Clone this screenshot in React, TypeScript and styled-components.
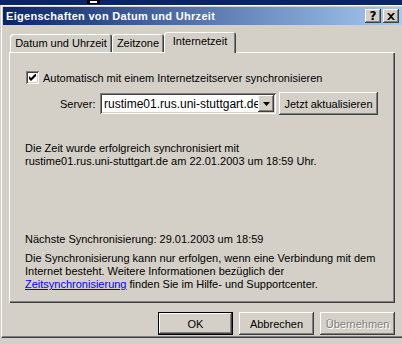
import styled, { createGlobalStyle } from "styled-components";

const face = "#d4d0c8";

const GlobalStyle = createGlobalStyle`
  html, body {
    margin: 0;
    padding: 0;
    background: ${face};
    overflow: hidden;
  }
  body {
    font-family: "Liberation Sans", Arial, sans-serif;
    font-size: 11px;
    color: #000;
  }
`;

const raised = `
  box-shadow: inset -1px -1px #404040, inset 1px 1px #fff,
    inset -2px -2px #808080, inset 2px 2px ${face};
`;

const sunken = `
  box-shadow: inset 1px 1px #808080, inset -1px -1px #fff,
    inset 2px 2px #404040, inset -2px -2px ${face};
`;

const TopStrip = styled.div`
  height: 5px;
  background: #0a246a;
  display: flex;
  padding-left: 87px;
`;

const Window = styled.div`
  margin-left: 1px;
  border-left: 1px solid #fff;
  border-top: 1px solid #fff;
  border-bottom: 1px solid #404040;
  padding-top: 1px;
  height: 333px;
  box-sizing: border-box;
  box-shadow: inset 0 -1px #808080;
`;

const TitleBar = styled.div`
  margin-left: 1px;
  height: 18px;
  display: flex;
  align-items: center;
  padding: 0 3px;
  background: linear-gradient(to right, #0a246a, #a6caf0);
  color: #fff;
  font-weight: bold;
  font-size: 11px;
`;

const TitleText = styled.span`
  flex: 1;
  white-space: nowrap;
  letter-spacing: 0.3px;
`;

const TitleButtons = styled.div`
  display: flex;
  gap: 2px;
`;

const TitleButton = styled.div`
  width: 16px;
  height: 14px;
  background: ${face};
  ${raised}
  display: flex;
  align-items: center;
  justify-content: center;
  color: #000;
  font-weight: bold;
  font-size: 12px;
  line-height: 14px;
  font-family: "DejaVu Sans", sans-serif;
`;

const Body = styled.div`
  padding-left: 7px;
`;

const TabRow = styled.div`
  margin-top: 7px;
  display: flex;
  align-items: flex-end;
  height: 20px;
  padding-left: 1px;
`;

const Tab = styled.div<{ $active?: boolean; $w: number }>`
  width: ${(p) => p.$w}px;
  height: ${(p) => (p.$active ? 21 : 18)}px;
  margin-bottom: ${(p) => (p.$active ? -1 : 0)}px;
  position: relative;
  z-index: ${(p) => (p.$active ? 1 : 0)};
  box-sizing: border-box;
  background: ${face};
  border-radius: 3px 3px 0 0;
  box-shadow: inset 1px 1px #fff, inset -1px 0 #404040, inset -2px 0 #808080;
  display: flex;
  justify-content: center;
  padding-top: 3px;
  white-space: nowrap;
`;

const Panel = styled.div`
  width: 386px;
  height: 251px;
  box-sizing: border-box;
  box-shadow: inset 1px 1px #fff, inset -1px -1px #404040, inset -2px -2px #808080;
  padding: 19px 0 0 16px;
  display: flex;
  flex-direction: column;
`;

const CheckRow = styled.label`
  display: flex;
  align-items: center;
  gap: 4px;
  height: 13px;
  margin-left: 1px;
  white-space: nowrap;
`;

const CheckBox = styled.span`
  width: 13px;
  height: 13px;
  background: #fff;
  ${sunken}
  display: flex;
  align-items: center;
  justify-content: center;
`;

const ServerRow = styled.div`
  margin-top: 8px;
  display: flex;
  align-items: center;
  gap: 3px;
  padding-left: 35px;
`;

const FieldLabel = styled.span`
  width: 37px;
`;

const Combo = styled.div`
  width: 176px;
  height: 21px;
  box-sizing: border-box;
  background: #fff;
  ${sunken}
  display: flex;
  align-items: center;
  padding: 2px;
`;

const ComboText = styled.span`
  flex: 1;
  min-width: 0;
  overflow: hidden;
  white-space: nowrap;
  padding-left: 2px;
  font-size: 12px;
`;

const ComboArrow = styled.div`
  width: 16px;
  height: 17px;
  flex-shrink: 0;
  background: ${face};
  ${raised}
  display: flex;
  align-items: center;
  justify-content: center;
`;

const Button = styled.div<{ $default?: boolean; $disabled?: boolean; $w?: number }>`
  width: ${(p) => p.$w ?? 75}px;
  height: 23px;
  box-sizing: border-box;
  background: ${face};
  display: flex;
  align-items: center;
  justify-content: center;
  white-space: nowrap;
  color: ${(p) => (p.$disabled ? "#808080" : "#000")};
  text-shadow: ${(p) => (p.$disabled ? "1px 1px #fff" : "none")};
  box-shadow: ${(p) =>
    p.$default
      ? "inset 0 0 0 1px #000, inset -2px -2px #404040, inset 2px 2px #fff, inset -3px -3px #808080"
      : `inset -1px -1px #404040, inset 1px 1px #fff, inset -2px -2px #808080, inset 2px 2px ${face}`};
`;

const Text = styled.div<{ $mt: number }>`
  margin-top: ${(p) => p.$mt}px;
  line-height: 13px;
  white-space: nowrap;
`;

const Link = styled.a`
  color: #0000ff;
  text-decoration: underline;
`;

const Footer = styled.div`
  width: 386px;
  margin-top: 9px;
  display: flex;
  justify-content: flex-end;
  gap: 6px;
`;

const Check = () => (
  <svg width="7" height="7" viewBox="0 0 7 7">
    <path d="M0 2v3l2 2l5-5v-3l-5 5z" fill="#000" />
  </svg>
);

export default function App() {
  return (
    <>
      <GlobalStyle />
      <TopStrip>
        <svg width="13" height="5" viewBox="0 0 13 5">
          <rect width="13" height="4" fill="#000" />
          <rect x="3" y="1" width="7" height="2" fill="#fff" />
        </svg>
      </TopStrip>
      <Window>
        <TitleBar>
          <TitleText>Eigenschaften von Datum und Uhrzeit</TitleText>
          <TitleButtons>
            <TitleButton>?</TitleButton>
            <TitleButton>
              <svg width="8" height="7" viewBox="0 0 8 7">
                <path d="M0 0h2l2 2l2-2h2l-3 3.5l3 3.5h-2l-2-2l-2 2h-2l3-3.5z" fill="#000" />
              </svg>
            </TitleButton>
          </TitleButtons>
        </TitleBar>
        <Body>
          <TabRow>
            <Tab $w={102}>Datum und Uhrzeit</Tab>
            <Tab $w={52}>Zeitzone</Tab>
            <Tab $w={72} $active>
              Internetzeit
            </Tab>
          </TabRow>
          <Panel>
            <CheckRow>
              <CheckBox>
                <Check />
              </CheckBox>
              Automatisch mit einem Internetzeitserver synchronisieren
            </CheckRow>
            <ServerRow>
              <FieldLabel>Server:</FieldLabel>
              <Combo>
                <ComboText>rustime01.rus.uni-stuttgart.de</ComboText>
                <ComboArrow>
                  <svg width="7" height="4" viewBox="0 0 7 4">
                    <path d="M0 0h7l-3.5 4z" fill="#000" />
                  </svg>
                </ComboArrow>
              </Combo>
              <Button $w={99}>Jetzt aktualisieren</Button>
            </ServerRow>
            <Text $mt={27}>
              Die Zeit wurde erfolgreich synchronisiert mit
              <br />
              rustime01.rus.uni-stuttgart.de am 22.01.2003 um 18:59 Uhr.
            </Text>
            <Text $mt={65}>Nächste Synchronisierung: 29.01.2003 um 18:59</Text>
            <Text $mt={6}>
              Die Synchronisierung kann nur erfolgen, wenn eine Verbindung mit dem
              <br />
              Internet besteht. Weitere Informationen bezüglich der
              <br />
              <Link>Zeitsynchronisierung</Link> finden Sie im Hilfe- und Supportcenter.
            </Text>
          </Panel>
          <Footer>
            <Button $default>OK</Button>
            <Button>Abbrechen</Button>
            <Button $disabled>Übernehmen</Button>
          </Footer>
        </Body>
      </Window>
    </>
  );
}
